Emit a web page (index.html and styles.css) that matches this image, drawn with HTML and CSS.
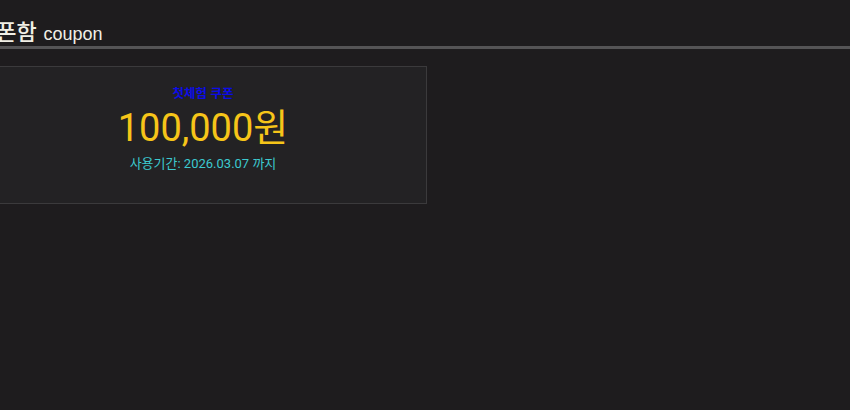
FILE: index.html
```html
<!DOCTYPE html>
<html lang="ko">
<head>
<meta charset="utf-8">
<link rel="stylesheet" href="styles.css">
</head>
<body>
<div class="page">
  <h2 class="title"><span class="title-ko">쿠폰함</span> <span class="title-en">coupon</span></h2>
  <div class="coupons">
    <div class="coupon">
      <div class="coupon-name">첫체험 쿠폰</div>
      <div class="coupon-amount">100,000원</div>
      <div class="coupon-date">사용기간: 2026.03.07 까지</div>
    </div>
  </div>
</div>
</body>
</html>
```
FILE: styles.css
```css
html, body {
  margin: 0;
  padding: 0;
  background: #1e1c1e;
}
body {
  font-family: "Noto Sans CJK KR", "Noto Sans", sans-serif;
  overflow: hidden;
}
.page {
  margin-left: -24px;
  width: 874px;
}
.title {
  margin: 0;
  padding-top: 15px;
  height: 31px;
  border-bottom: 3px solid #555456;
  font-weight: normal;
  line-height: 29px;
  color: #f1efe6;
}
.title-ko {
  font-size: 22px;
  font-weight: 500;
}
.title-en {
  font-family: "Liberation Sans", Arial, sans-serif;
  font-size: 18px;
}
.coupons {
  padding-top: 17px;
}
.coupon {
  width: 451px;
  height: 138px;
  border: 1px solid #3b3a3c;
  background: #232224;
  box-sizing: border-box;
  display: flex;
  flex-direction: column;
  align-items: center;
  padding-top: 16px;
  padding-left: 3px;
}
.coupon-name {
  font-size: 12.5px;
  font-weight: 700;
  line-height: 20px;
  color: #0c0ce8;
}
.coupon-amount {
  font-family: Roboto, "Noto Sans CJK KR", sans-serif;
  font-size: 38px;
  line-height: 50px;
  color: #f6c519;
}
.coupon-date {
  font-family: Roboto, "Noto Sans CJK KR", sans-serif;
  font-size: 13px;
  line-height: 20px;
  margin-top: 1px;
  color: #3cc9cf;
}
```
